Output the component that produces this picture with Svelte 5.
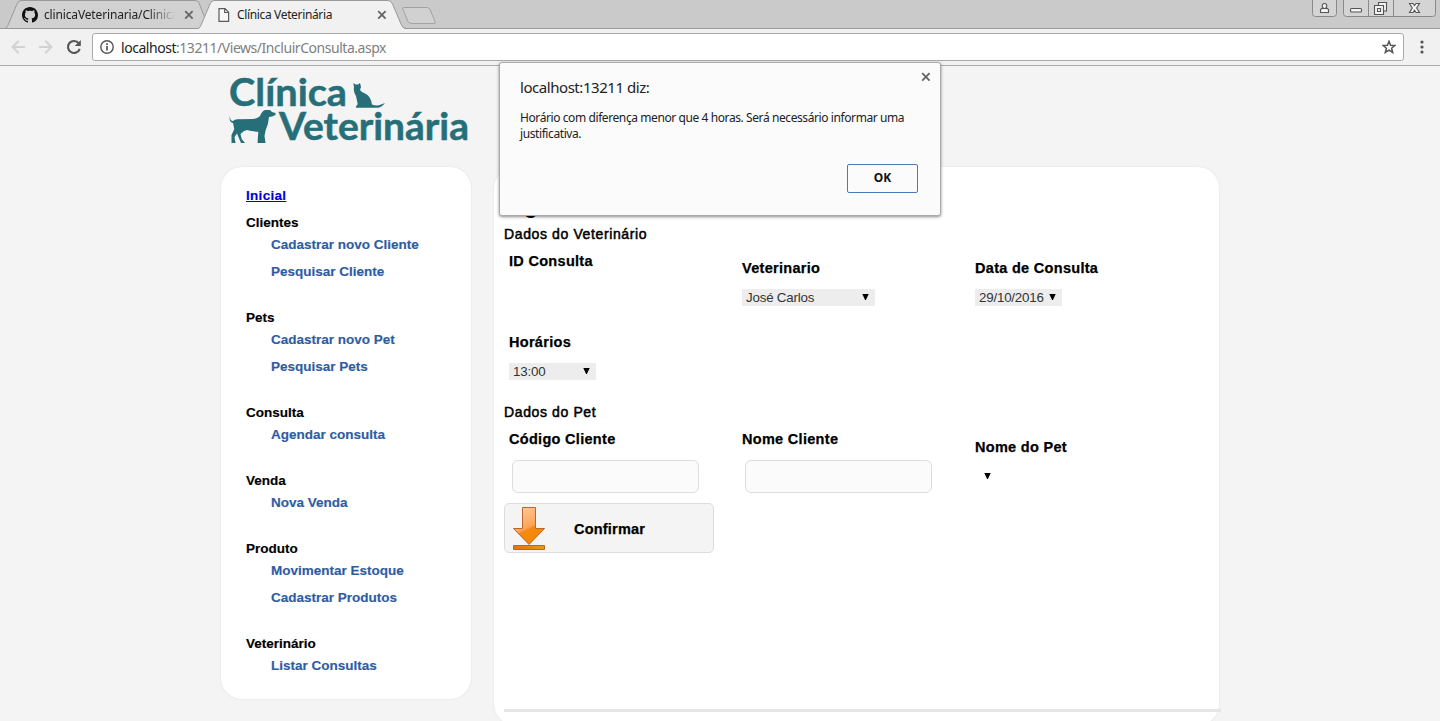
<script>
  const menu = [
    { title: 'Clientes', items: ['Cadastrar novo Cliente', 'Pesquisar Cliente'] },
    { title: 'Pets', items: ['Cadastrar novo Pet', 'Pesquisar Pets'] },
    { title: 'Consulta', items: ['Agendar consulta'] },
    { title: 'Venda', items: ['Nova Venda'] },
    { title: 'Produto', items: ['Movimentar Estoque', 'Cadastrar Produtos'] },
    { title: 'Veterinário', items: ['Listar Consultas'] }
  ];
</script>

{#snippet cross()}
  <svg class="cross" width="10" height="10" viewBox="0 0 10 10"><path d="M1.2 1.2 8.6 8.6M8.6 1.2 1.2 8.6" stroke="#666" stroke-width="1.8" /></svg>
{/snippet}

{#snippet picker(text, width)}
  <div class="picker" class:empty={!text} style="width:{width}px">
    <span>{text}</span>
    <svg width="7" height="6" viewBox="0 0 7 6"><path d="M.3 0H6.700L3.900 6H3.100Z" fill="#000" /></svg>
  </div>
{/snippet}

<div class="screen">
  <header>
    <div class="strip">
      <svg class="shapes" width="1440" height="29" viewBox="0 0 1440 29" fill="none">
        <path d="M0 28.5H1440" stroke="#999" />
        <path d="M5 28.5C7 28 7.500 26 8.500 24L17 4Q18.500 .5 21 .5H195Q198 .5 199 3L209 28.500Z" fill="#d1d1d1" stroke="#999" />
        <path d="M198 29C200 28 200.500 26 201.500 24L210 4Q211.500 .5 214 .5H388Q391 .5 392.500 4L401 24Q402.500 28.500 406 29Z" fill="#f1f1f1" />
        <path d="M198 28.500C200 28 200.500 26 201.500 24L210 4Q211.500 .5 214 .5H388Q391 .5 392.500 4L401 24Q402.500 28.500 406 28.500" stroke="#999" />
        <path d="M404 7.500H427Q429 7.500 430 9.500L435 21.500Q436 23.500 434 23.500H412Q409 23.500 408 21.500L403 9.500Q402 7.500 404 7.500Z" fill="#d1d1d1" stroke="#a3a3a3" />
      </svg>
      <div class="tab first">
        <svg width="16" height="16" viewBox="0 0 16 16"><path fill="#111" d="M8 0C3.580 0 0 3.580 0 8c0 3.540 2.290 6.530 5.470 7.590.4.070.55-.17.55-.38 0-.19-.01-.82-.01-1.490-2.010.37-2.530-.49-2.690-.94-.09-.23-.48-.94-.82-1.130-.28-.15-.68-.52-.01-.53.63-.01 1.080.58 1.230.82.72 1.210 1.870.87 2.330.66.07-.52.28-.87.51-1.070-1.780-.2-3.640-.89-3.640-3.950 0-.87.31-1.590.82-2.150-.08-.2-.36-1.020.08-2.120 0 0 .67-.21 2.200.82.64-.18 1.320-.27 2-.27s1.360.09 2 .27c1.530-1.040 2.200-.82 2.200-.82.44 1.100.16 1.920.08 2.120.51.56.82 1.270.82 2.150 0 3.070-1.870 3.750-3.650 3.950.29.25.54.73.54 1.480 0 1.070-.01 1.930-.01 2.200 0 .21.15.46.55.38A8.010 8.010 0 0 0 16 8c0-4.420-3.580-8-8-8z" /></svg>
        <span class="tab-title faded">clinicaVeterinaria/Clinica</span>
        {@render cross()}
      </div>
      <div class="tab second">
        <svg width="12" height="14" viewBox="0 0 12 14" fill="#f8f8f8" stroke="#5a5a5a" stroke-width="1.200"><path d="M1 .6H7L10.600 4.200V13.400H1ZM6.700 .6V4.500H10.600" /></svg>
        <span class="tab-title">Clínica Veterinária</span>
        {@render cross()}
      </div>
      <svg class="controls" width="128" height="18" viewBox="0 0 128 18" fill="none" stroke="#8a8a8a">
        <path d="M.5 0V13.500Q.5 16.500 3.500 16.500H21.500Q24.500 16.500 24.500 13.500V0M31.500 0V13.500Q31.500 16.500 34.500 16.500H120.500Q123.500 16.500 123.500 13.500V0M56.500 0V16M81.500 0V16" fill="#d4d4d4" />
        <g stroke="#555" stroke-width="1.100" fill="#f3f3f3">
          <path d="M8.500 12.500V9.500L11 7.500Q9.500 6 10.500 4.500Q12.500 2.500 14.500 4.500Q15.500 6 14 7.500L16.500 9.500V12.500ZM10.500 8.500H14.500" />
          <rect x="38.500" y="8.500" width="11" height="3.500" rx="1" />
          <path d="M66.500 2.500H74.500V11H66.500Z" /><path d="M62.500 5.500H71.500V14.500H62.500Z" /><path d="M65.500 8.500H68.500V11.500H65.500Z" />
          <path d="M97.500 3.500H101L102.500 5.500 104 3.500H107.500L104.700 8 107.500 12.500H104L102.500 10.300 101 12.500H97.500L100.300 8Z" />
        </g>
      </svg>
    </div>
    <div class="toolbar">
      <svg width="72" height="16" viewBox="0 0 72 16" fill="none" stroke-width="2">
        <path d="M15 8H3M8.800 1.800 2.600 8 8.800 14.200M29 8H41M35.200 1.800 41.400 8 35.200 14.200" stroke="#d2d2d2" />
        <path d="M68.700 4.200A6 6 0 1 0 69.700 9.800" stroke="#555" stroke-width="2.100" /><path d="M70.800 1V7H64.800Z" fill="#555" />
      </svg>
      <div class="address">
        <svg width="14" height="14" viewBox="0 0 14 14" fill="none" stroke="#555"><circle cx="7" cy="7" r="6.200" stroke-width="1.400" /><path d="M7 6V10.600M7 3.200V4.900" stroke-width="1.700" /></svg>
        <span class="url"><b>localhost</b>:13211/Views/IncluirConsulta.aspx</span>
        <svg class="star" width="14" height="14" viewBox="0 0 14 14" fill="none" stroke="#555" stroke-width="1.500"><path d="M7 1.300 8.600 5.200 12.900 5.500 9.600 8.200 10.700 12.500 7 10.200 3.300 12.500 4.400 8.200 1.100 5.500 5.400 5.200Z" /></svg>
      </div>
      <svg width="4" height="14" viewBox="0 0 4 14" fill="#555"><circle cx="2" cy="2" r="1.600" /><circle cx="2" cy="7" r="1.600" /><circle cx="2" cy="12" r="1.600" /></svg>
    </div>
  </header>

  <div class="page">
    <svg class="logo" width="245" height="72" viewBox="0 0 245 72" fill="#276f78">
      <text x="1" y="33" textLength="118" lengthAdjust="spacingAndGlyphs">Clínica</text>
      <text x="51" y="67" textLength="190" lengthAdjust="spacingAndGlyphs">Veterinária</text>
      <path d="M125.300 10 127.700 11.500H130L132 10 133 14 132 17Q133.500 19.500 138 21Q143 24 144 31.500Q149 33.500 153 31.500L157 30Q154 34 150 34.700H128V33.500L129.700 31 128 23Q125 18 126 14Z" />
      <path d="M2 42.500Q1.500 47.500 5 48Q7 46 10 46.300L25 46Q30 45.500 32 43Q34 38 37 37H42L44 39 47.500 40V42L44 43.500 41 44Q40.500 51 37.700 57L36.500 63 37.500 70H33L32.700 61 33 70H29.500L30.300 58.700Q24 58.500 18.700 57Q15 58 12.500 61L13.700 66 17 70H13L9 60.500 6.500 64 7.500 70H3.500L3.500 62 6.300 56 5 50Q.5 49 2 42.500Z" />
    </svg>
    <div class="columns">
      <nav>
        <a class="home" href="#inicial">Inicial</a>
        {#each menu as group}
          <section>
            <h3>{group.title}</h3>
            {#each group.items as item}<a href="#menu">{item}</a>{/each}
          </section>
        {/each}
      </nav>
      <main>
        <h1>Agendar</h1>
        <h2>Dados do Veterinário</h2>
        <div class="grid vet">
          <div class="field raised"><span class="label">ID Consulta</span></div>
          <div class="field"><span class="label">Veterinario</span>{@render picker('José Carlos', 133)}</div>
          <div class="field"><span class="label">Data de Consulta</span>{@render picker('29/10/2016', 87)}</div>
          <div class="field"><span class="label">Horários</span>{@render picker('13:00', 87)}</div>
        </div>
        <h2>Dados do Pet</h2>
        <div class="grid pet">
          <div class="field"><span class="label">Código Cliente</span><input aria-label="Código Cliente" /></div>
          <div class="field"><span class="label">Nome Cliente</span><input aria-label="Nome Cliente" /></div>
          <div class="field lowered"><span class="label">Nome do Pet</span>{@render picker('', 22)}</div>
        </div>
        <button class="confirm">
          <svg width="34" height="46" viewBox="0 0 34 46" stroke="#b9682a">
            <defs>
              <linearGradient id="arrow" x1="0" y1="0" x2=".4" y2="1"><stop offset="0" stop-color="#ffd0a4" /><stop offset=".62" stop-color="#fba457" /><stop offset=".68" stop-color="#f58a12" /><stop offset="1" stop-color="#f98500" /></linearGradient>
              <linearGradient id="base"><stop offset="0" stop-color="#dd7510" /><stop offset="1" stop-color="#f09a10" /></linearGradient>
            </defs>
            <path d="M10.500 2.500H23.500V23.500H32.500L17 39.500 1.500 23.500H10.500Z" fill="url(#arrow)" />
            <path d="M1.500 40.500H32.500V44.500H1.500Z" fill="url(#base)" />
          </svg>
          <span>Confirmar</span>
        </button>
        <hr />
      </main>
    </div>
  </div>

  <div class="dialog" role="alertdialog">
    <div class="dialog-head"><span>localhost:13211 diz:</span>{@render cross()}</div>
    <p>Horário com diferença menor que 4 horas. Será necessário informar uma<br />justificativa.</p>
    <button>OK</button>
  </div>
</div>

<style>
  :global(body) { background: #f4f4f4; overflow: hidden; }
  .screen { position: relative; width: 1440px; height: 721px; overflow: hidden; background: #f4f4f4; font-family: "Liberation Sans", Arial, sans-serif; box-sizing: border-box; }
  svg { display: block; flex: none; }
  header { height: 66px; box-sizing: border-box; border-bottom: 1px solid #aaa; background: #f1f1f1; font-family: "Noto Sans", sans-serif; }
  .strip { position: relative; display: flex; height: 29px; background: #cacaca; }
  .shapes { position: absolute; inset: 0; }
  .tab { position: relative; display: flex; align-items: center; box-sizing: border-box; height: 29px; }
  .first { width: 194px; padding-left: 22px; }
  .second { width: 194px; padding-left: 24px; }
  .tab-title { flex: none; width: 133px; margin-left: 6px; overflow: hidden; white-space: nowrap; font-size: 12px; letter-spacing: -.35px; color: #222; }
  .first .tab-title { letter-spacing: -.15px; }
  .second .tab-title { margin-left: 7px; }
  .faded { -webkit-mask-image: linear-gradient(90deg, #000 78%, transparent 99%); mask-image: linear-gradient(90deg, #000 78%, transparent 99%); }
  .tab .cross { margin-left: 7px; }
  .controls { position: relative; margin-left: auto; }
  .toolbar { display: flex; align-items: center; height: 36px; padding-left: 10px; }
  .address { display: flex; align-items: center; box-sizing: border-box; width: 1312px; height: 28px; margin: 0 16px 0 10px; padding: 0 7px; border: 1px solid #aaa; border-radius: 3px; background: #fff; }
  .url { margin-left: 7px; color: #808080; font-size: 14px; letter-spacing: -.46px; }
  .url b { font-weight: 400; color: #222; }
  .star { margin-left: auto; }

  .page { width: 1000px; margin: 0 auto; }
  .logo { margin: 7px 0 0 8px; overflow: visible; }
  .logo text { font: 700 38.500px Lato, sans-serif; stroke: #276f78; stroke-width: .5px; }
  .columns { display: flex; align-items: flex-start; gap: 23px; margin: 22px 0 0 1px; }
  nav, main { box-sizing: border-box; background: #fff; border-radius: 21px; box-shadow: 0 0 2px #dcdcec; }
  nav { width: 250px; height: 532px; padding: 20px 25px; font-size: 13.500px; font-weight: 700; -webkit-text-stroke: .15px currentColor; }
  nav a { display: block; margin-left: 25px; color: #2e5ca3; line-height: 27px; text-decoration: none; }
  nav .home { margin: 0; height: 27px; line-height: 17px; letter-spacing: .3px; color: #0000d8; text-decoration: underline; }
  nav section { margin-bottom: 24px; }
  h3 { margin: 0; font-size: 13.500px; line-height: 17px; }
  main { width: 725px; height: 558px; padding: 26px 0 0 10px; }
  h1 { margin: 0; height: 33px; padding-left: 5px; font-size: 21px; line-height: 27px; letter-spacing: .3px; }
  h2 { margin: 0; font: 400 14px/16px "Liberation Sans", sans-serif; letter-spacing: .62px; -webkit-text-stroke: .5px #000; }
  .grid { display: grid; grid-template-columns: 233px 233px 233px; }
  .vet { grid-template-rows: 74px 70px; padding-top: 18px; height: 144px; }
  .field { display: flex; flex-direction: column; align-items: flex-start; padding-left: 5px; }
  .raised { margin-top: -7px; }
  .lowered { padding-top: 8px; }
  .label { font-size: 14.500px; font-weight: 700; line-height: 16px; letter-spacing: .3px; -webkit-text-stroke: .25px #000; }
  .picker { display: flex; align-items: center; justify-content: space-between; box-sizing: border-box; height: 17px; margin-top: 13px; padding: 0 6px 0 4px; background: #ededed; color: #333; font-size: 13.330px; letter-spacing: -.2px; }
  .picker svg { margin-top: -1px; }
  .empty { background: none; }
  .pet { height: 72px; padding-top: 11px; }
  input { box-sizing: border-box; width: 187px; height: 33px; margin: 13px 0 0 3px; border: 1px solid #ddd; border-radius: 6px; background: #fbfbfb; }
  .confirm { display: flex; align-items: center; box-sizing: border-box; width: 210px; height: 50px; padding: 0 0 0 7px; border: 1px solid #ddd; border-radius: 5px; background: #f4f4f4; font: 700 14.500px "Liberation Sans", sans-serif; letter-spacing: .2px; color: #000; -webkit-text-stroke: .25px #000; }
  .confirm span { margin-left: 28px; padding-top: 2px; }
  hr { width: 717px; height: 3px; margin: 156px 0 0; border: 0; background: #e6e6e6; }

  .dialog { position: absolute; left: 499px; top: 62px; box-sizing: border-box; width: 442px; height: 154px; padding: 9px 22px 0 20px; border: 1px solid #aaa; border-radius: 3px; background: #fbfbfb; box-shadow: 0 1px 3px rgba(0,0,0,.45); color: #222; font-family: "Noto Sans", sans-serif; display: flex; flex-direction: column; }
  .dialog-head { display: flex; justify-content: space-between; height: 38px; font-size: 15px; line-height: 31px; letter-spacing: -.45px; }
  .dialog-head .cross { margin: 0 -13px 0 0; }
  .dialog p { margin: 0; font-size: 12px; line-height: 16px; letter-spacing: -.41px; white-space: nowrap; }
  .dialog button { align-self: flex-end; width: 71px; height: 29px; margin-top: 22px; padding: 0 0 2px; border: 1px solid #4a7ab8; border-radius: 2px; background: #fbfbfb; color: #111; font: 700 12px "Noto Sans", sans-serif; }
</style>
